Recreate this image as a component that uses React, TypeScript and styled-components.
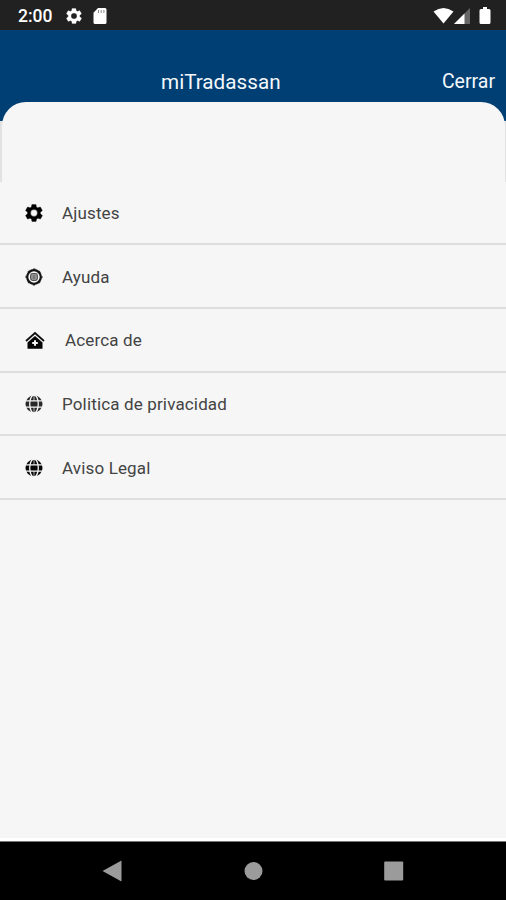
import React from "react";
import styled, { createGlobalStyle } from "styled-components";

const GlobalStyle = createGlobalStyle`
  * { box-sizing: border-box; }
  body { margin: 0; background: #f6f6f6; font-family: Roboto, "Liberation Sans", sans-serif; }
`;

const Screen = styled.div`
  width: 506px;
  height: 900px;
  display: flex;
  flex-direction: column;
  background: #f6f6f6;
  overflow: hidden;
`;

const StatusBar = styled.header`
  height: 30px;
  flex: none;
  display: flex;
  align-items: center;
  padding: 1px 15px 0 18px;
  background: #212121;
  color: #fff;
`;

const Clock = styled.span`
  width: 48px;
  font-size: 17.5px;
  font-weight: 500;
  line-height: 30px;
`;

const StatusIcons = styled.div<{ $end?: boolean }>`
  display: flex;
  align-items: center;
  gap: ${(p) => (p.$end ? "0" : "11px")};
  margin-left: ${(p) => (p.$end ? "auto" : "0")};
  svg { display: block; }
`;

const Top = styled.div`
  height: 152px;
  flex: none;
  display: flex;
  flex-direction: column;
  background: linear-gradient(#003f73 0 91px, #e2e2e3 91px);
`;

const TitleBar = styled.div`
  height: 72px;
  flex: none;
  display: grid;
  grid-template-columns: 1fr auto;
  align-items: end;
  padding: 0 11px 8px 161px;
  color: #f4f8fc;
`;

const Title = styled.h1`
  margin: 0;
  font-size: 20.7px;
  font-weight: 400;
  line-height: 24px;
`;

const CloseButton = styled.button`
  padding: 0;
  border: 0;
  background: none;
  color: inherit;
  font: 400 19.5px/24px Roboto, sans-serif;
`;

const SheetTop = styled.div`
  flex: 1;
  margin: 0 1px 0 2px;
  border-radius: 24px 24px 0 0;
  background: #f6f6f6;
`;

const Menu = styled.nav`
  flex: 1;
  display: flex;
  flex-direction: column;
`;

const MenuItem = styled.a`
  height: 63.7px;
  display: flex;
  align-items: center;
  gap: 19px;
  padding: 1px 0 0 25px;
  border-bottom: 2px solid #dedede;
  color: #000;
  svg { display: block; flex: none; }
  &:first-child { height: 63.3px; }
`;

const Label = styled.span`
  color: #434343;
  font-size: 17px;
  line-height: 24px;
  letter-spacing: 0.15px;
`;

const NavBar = styled.footer`
  height: 59px;
  flex: none;
  display: flex;
  align-items: flex-start;
  justify-content: space-between;
  padding: 18px 102px 0;
  border-top: 1px solid #777;
  background: #000;
  box-shadow: 0 -3px 0 #fff;
  svg { display: block; }
`;

const GEAR =
  "M19.4 13a7.5 7.5 0 0 0 0-2l2.1-1.7a.5.5 0 0 0 .1-.6l-2-3.5a.5.5 0 0 0-.6-.2l-2.5 1a7.4 7.4 0 0 0-1.7-1l-.4-2.6a.5.5 0 0 0-.5-.4h-4a.5.5 0 0 0-.5.4L9 5a7.4 7.4 0 0 0-1.7 1L4.9 5a.5.5 0 0 0-.6.2l-2 3.5a.5.5 0 0 0 .1.6L4.500 11a7.500 7.500 0 0 0 0 2l-2.100 1.700a.5.5 0 0 0-.1.6l2 3.500c.1.2.4.3.6.2l2.500-1c.5.4 1.100.7 1.700 1l.4 2.600c0 .2.3.4.5.4h4c.3 0 .5-.2.5-.4L15 19a7.400 7.400 0 0 0 1.700-1l2.400 1c.2.1.5 0 .6-.2l2-3.500a.5.5 0 0 0-.1-.6zM12 16a4 4 0 1 1 0-8 4 4 0 0 1 0 8z";

const Gear = ({ size }: { size: number }) => (
  <svg width={size} height={size} viewBox="1.500 1.500 21 21" fill="currentColor" stroke="currentColor" strokeWidth=".4">
    <path fillRule="evenodd" d={GEAR} />
  </svg>
);

const HelpIcon = () => (
  <svg width="18" height="18" viewBox="0 0 18 18" fill="none" stroke="#111">
    <circle cx="9" cy="9" r="6.800" strokeWidth="2.200" />
    <circle cx="9" cy="9" r="8" strokeWidth="1" strokeDasharray="2.500 3.783" strokeDashoffset="1.250" />
    <rect x="5.700" y="5.700" width="6.600" height="6.600" rx="1.800" fill="#aaa" stroke="#555" strokeWidth="1.300" />
    <path d="M7.500 8h3M7.500 10h3" stroke="#444" />
  </svg>
);

const HomeIcon = () => (
  <svg width="21" height="18" viewBox="0 0 21 18">
    <path d="M1 10 10 2l9 8" fill="none" stroke="#111" strokeWidth="1.800" />
    <path d="M2.500 11.600 10 5l7.500 6.600V17.800h-15z" fill="#050505" />
    <path d="M10 9.200v5.600M7.200 12h5.600" stroke="#f6f6f6" strokeWidth="2" />
  </svg>
);

const GlobeIcon = ({ color }: { color: string }) => (
  <svg width="18" height="18" viewBox="0 0 18 18">
    <circle cx="9" cy="9" r="8.500" fill={color} />
    <g fill="none" stroke="#f6f6f6" strokeWidth="1.300">
      <path d="M0 5.800h18M0 12.200h18" />
      <ellipse cx="9" cy="9" rx="4.300" ry="9" />
      <path d="M9 0v6M9 12v6" strokeWidth=".7" />
    </g>
  </svg>
);

const items = [
  { text: "Ajustes", icon: <Gear size={18} /> },
  { text: "Ayuda", icon: <HelpIcon /> },
  { text: "Acerca de", icon: <HomeIcon /> },
  { text: "Politica de privacidad", icon: <GlobeIcon color="#292929" /> },
  { text: "Aviso Legal", icon: <GlobeIcon color="#080808" /> },
];

export default function App() {
  return (
    <Screen>
      <GlobalStyle />
      <StatusBar>
        <Clock>2:00</Clock>
        <StatusIcons>
          <Gear size={16} />
          <svg width="14" height="16" viewBox="0 0 14 16">
            <path d="M5 0h7q1.500 0 1.500 1.500v13Q13.500 16 12 16H2Q.5 16 .5 14.500V4.700z" fill="#fff" />
            <path d="M5.500 2v3M8.200 2v3M10.900 2v3" stroke="#888" />
          </svg>
        </StatusIcons>
        <StatusIcons $end>
          <svg width="21" height="16" viewBox="0 0 21 16">
            <path d="M.5 3.500Q10.500-3.500 20.500 3.500L10.500 15.500z" fill="#fff" />
          </svg>
          <svg width="16" height="16" viewBox="0 0 16 16">
            <path d="M16 0v16H0z" fill="#666" />
            <path d="M10.500 5.500V16H0z" fill="#fff" />
          </svg>
          <svg width="21" height="17" viewBox="0 0 21 17">
            <path d="M13 0h4v2h2q1.500 0 1.500 1.500v12Q20.500 17 19 17h-8q-1.500 0-1.500-1.500v-12Q9.500 2 11 2h2z" fill="#fff" />
          </svg>
        </StatusIcons>
      </StatusBar>
      <Top>
        <TitleBar>
          <Title>miTradassan</Title>
          <CloseButton>Cerrar</CloseButton>
        </TitleBar>
        <SheetTop />
      </Top>
      <Menu>
        {items.map((item) => (
          <MenuItem key={item.text}>
            {item.icon}
            <Label>{item.text}</Label>
          </MenuItem>
        ))}
      </Menu>
      <NavBar>
        <svg width="20" height="22" viewBox="0 0 20 22">
          <path d="M19.500.5v21L.5 11z" fill="#9b9b9b" />
        </svg>
        <svg width="20" height="22" viewBox="0 0 20 22">
          <circle cx="10.500" cy="11" r="9" fill="#9b9b9b" />
        </svg>
        <svg width="20" height="22" viewBox="0 0 20 22">
          <rect x=".2" y="1.500" width="19" height="19" rx="1" fill="#9b9b9b" />
        </svg>
      </NavBar>
    </Screen>
  );
}
